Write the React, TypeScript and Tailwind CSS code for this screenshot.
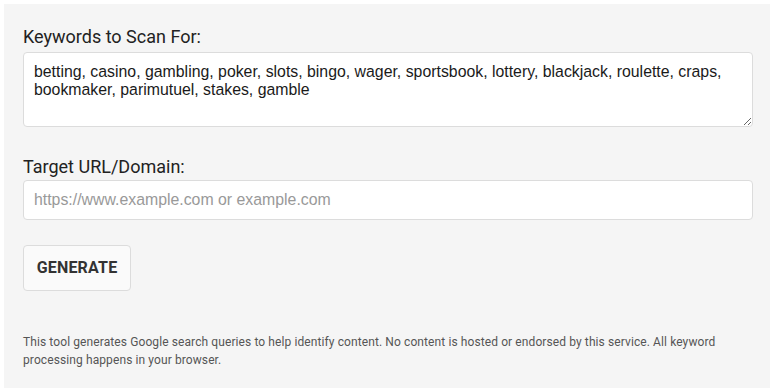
import { useState } from "react";

const defaultKeywords =
  "betting, casino, gambling, poker, slots, bingo, wager, sportsbook, lottery, blackjack, roulette, craps, bookmaker, parimutuel, stakes, gamble";

export default function App() {
  const [keywords, setKeywords] = useState(defaultKeywords);
  const [target, setTarget] = useState("");

  return (
    <div className="min-h-[391px] w-[776px] bg-white pt-[4px] pl-[4px] font-['Roboto',sans-serif]">
      <div className="w-[766px] h-[384px] bg-[#f5f5f5] px-[19px] pt-[21px]">
        <label className="block text-[18px] leading-[24px] text-[#222] mb-[3px]">Keywords to Scan For:</label>
        <textarea
          value={keywords}
          onChange={(e) => setKeywords(e.target.value)}
          className="block w-[730px] h-[75px] bg-white border border-[#dcdcdc] rounded-[4px] px-[10px] py-[10px] text-[15.85px] leading-[18px] text-[#1a1a1a] font-[family-name:'Liberation_Sans',Arial,sans-serif] outline-none"
        />

        <label className="block mt-[28px] text-[18px] leading-[24px] text-[#222] mb-[1px]">Target URL/Domain:</label>
        <input
          value={target}
          onChange={(e) => setTarget(e.target.value)}
          placeholder="https://www.example.com or example.com"
          className="block w-[730px] h-[40px] bg-white border border-[#dcdcdc] rounded-[4px] px-[10px] text-[15.85px] text-[#222] placeholder:text-[#999] font-[family-name:'Liberation_Sans',Arial,sans-serif] outline-none"
        />

        <button className="mt-[25px] w-[108px] h-[46px] bg-[#fafafa] border border-[#dcdcdc] rounded-[4px] text-[16px] font-bold text-[#333] tracking-[0.2px]">
          GENERATE
        </button>

        <div className="mt-[42px] w-[732px] text-[12px] leading-[18px] text-[#555] tracking-[0.1px]">
          This tool generates Google search queries to help identify content. No content is hosted or endorsed by this service. All keyword processing happens in your browser.
        </div>
      </div>
    </div>
  );
}
